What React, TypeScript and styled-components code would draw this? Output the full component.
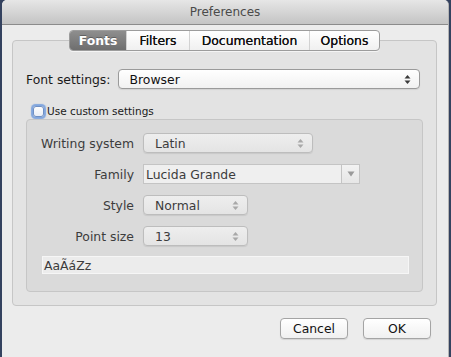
import React from 'react'
import styled, { createGlobalStyle } from 'styled-components'

const GlobalStyle = createGlobalStyle`
  html, body {
    margin: 0;
    padding: 0;
    background: #34425f;
    overflow: hidden;
  }
  * {
    box-sizing: border-box;
  }
`

const Window = styled.div`
  margin-left: 2px;
  width: 447px;
  height: 357px;
  background: #ececec;
  border-radius: 5px 5px 0 0;
  border-right: 1px solid #b4b4b4;
  overflow: hidden;
  display: flex;
  flex-direction: column;
  font-family: "Lucida Grande", "DejaVu Sans", sans-serif;
  font-size: 12.4px;
  color: #1a1a1a;
`

const TitleBar = styled.div`
  height: 25px;
  flex: none;
  display: flex;
  align-items: center;
  justify-content: center;
  background: linear-gradient(#e6e6e6, #c4c4c4);
  border-bottom: 1px solid #8b8b8b;
  color: #4a4a4a;
  font-size: 12px;
`

const Body = styled.div`
  padding: 5px 11px 0 10px;
  display: flex;
  flex-direction: column;
`

const TabBar = styled.div`
  display: flex;
  justify-content: center;
  margin-bottom: -11px;
  position: relative;
  z-index: 1;
`

const TabStrip = styled.div`
  display: flex;
  height: 21px;
  border: 1px solid #9c9c9c;
  border-radius: 4px;
  overflow: hidden;
  background: linear-gradient(#ffffff, #f0f0f0);
  box-shadow: 0 1px 0 rgba(255, 255, 255, 0.6);
`

const Tab = styled.div<{ $active?: boolean; $w: number }>`
  width: ${p => p.$w}px;
  display: flex;
  align-items: center;
  justify-content: center;
  font-size: 12.4px;
  color: ${p => (p.$active ? '#ffffff' : '#111111')};
  font-weight: ${p => (p.$active ? 600 : 500)};
  background: ${p => (p.$active ? 'linear-gradient(#8e8e8e, #6e6e6e)' : 'transparent')};
  text-shadow: ${p => (p.$active ? '0 -1px 0 rgba(0,0,0,0.3)' : '0 0 0.3px #111')};
  & + & {
    border-left: 1px solid ${p => (p.$active ? '#6e6e6e' : '#d2d2d2')};
  }
`

const Pane = styled.div`
  border: 1px solid #c6c6c6;
  border-radius: 4px;
  background: #e3e3e3;
  padding: 28px 13px 13px 13px;
  display: flex;
  flex-direction: column;
`

const Row = styled.div`
  display: flex;
  align-items: center;
  gap: 7px;
  margin-right: 3px;
`

const Label = styled.span<{ $muted?: boolean }>`
  white-space: nowrap;
  color: ${p => (p.$muted ? '#3c3c3c' : '#1a1a1a')};
`

const SelectBox = styled.div<{ $w?: number; $disabled?: boolean }>`
  position: relative;
  height: 20px;
  width: ${p => (p.$w ? `${p.$w}px` : 'auto')};
  flex: ${p => (p.$w ? 'none' : '1')};
  border: 1px solid ${p => (p.$disabled ? '#bdbdbd' : '#9a9a9a')};
  border-radius: 4px;
  background: ${p => (p.$disabled ? 'linear-gradient(#eeeeee, #e4e4e4)' : 'linear-gradient(#ffffff, #f1f1f1)')};
  color: ${p => (p.$disabled ? '#3c3c3c' : '#111111')};
  display: flex;
  align-items: center;
  padding-left: 11px;
  box-shadow: 0 1px 1px rgba(0, 0, 0, 0.08);
`

const Stepper = styled.svg`
  position: absolute;
  right: 8px;
  top: 4px;
`

const ComboBox = styled.div`
  width: 217px;
  height: 20px;
  border: 1px solid #c4c4c4;
  background: #efefef;
  display: flex;
  align-items: center;
  color: #3c3c3c;
`

const ComboText = styled.span`
  flex: 1;
  padding-left: 2px;
`

const ComboButton = styled.div`
  width: 18px;
  height: 100%;
  border-left: 1px solid #c4c4c4;
  display: flex;
  align-items: center;
  justify-content: center;
  background: linear-gradient(#f2f2f2, #e6e6e6);
`

const CheckRow = styled.div`
  display: flex;
  align-items: center;
  height: 14px;
  margin: 15px 0 0 7px;
  font-size: 10.5px;
  gap: 3px;
`

const CheckBox = styled.span`
  width: 11px;
  height: 11px;
  border: 1px solid #6e8fc4;
  border-radius: 3px;
  background: linear-gradient(#fdfdfd, #e9eef6);
  box-shadow: 0 0 1px 1.5px rgba(96, 145, 220, 0.75);
`

const Group = styled.div`
  margin-top: 1px;
  border: 1px solid #c6c6c6;
  border-radius: 4px;
  background: #dadada;
  padding: 13px 14px 17px 14px;
  display: flex;
  flex-direction: column;
  gap: 10px;
`

const FormGrid = styled.div`
  display: grid;
  grid-template-columns: 93px auto;
  column-gap: 9px;
  row-gap: 11px;
  align-items: center;
  justify-items: start;
`

const FormLabel = styled(Label)`
  justify-self: end;
`

const Preview = styled.div`
  margin-left: 1px;
  width: 367px;
  height: 18px;
  background: #ececec;
  border: 1px solid #f6f6f6;
  display: flex;
  align-items: center;
  padding-left: 1px;
  color: #3c3c3c;
`

const Footer = styled.div`
  display: flex;
  justify-content: flex-end;
  gap: 15px;
  padding: 12px 6px 0 0;
`

const Button = styled.div`
  width: 68px;
  height: 21px;
  border: 1px solid #a4a4a4;
  border-radius: 4px;
  background: linear-gradient(#ffffff, #f0f0f0);
  display: flex;
  align-items: center;
  justify-content: center;
  color: #111111;
  box-shadow: 0 1px 1px rgba(0, 0, 0, 0.1);
`

const Arrows: React.FC<{ color: string }> = ({ color }) => (
  <Stepper width="7" height="11" viewBox="0 0 7 11">
    <path d="M3.5 1 L6.5 4.5 L0.5 4.5 Z" fill={color} />
    <path d="M0.5 6.5 L6.5 6.5 L3.5 10 Z" fill={color} />
  </Stepper>
)

const tabs = [
  { name: 'Fonts', w: 56 },
  { name: 'Filters', w: 63 },
  { name: 'Documentation', w: 120 },
  { name: 'Options', w: 70 }
]

export default function App () {
  return (
    <>
      <GlobalStyle />
      <Window>
        <TitleBar>Preferences</TitleBar>
        <Body>
          <TabBar>
            <TabStrip>
              {tabs.map((t, i) => (
                <Tab key={t.name} $active={i === 0} $w={t.w}>{t.name}</Tab>
              ))}
            </TabStrip>
          </TabBar>
          <Pane>
            <Row>
              <Label>Font settings:</Label>
              <SelectBox>
                Browser
                <Arrows color="#3a3a3a" />
              </SelectBox>
            </Row>
            <CheckRow>
              <CheckBox />
              <Label>Use custom settings</Label>
            </CheckRow>
            <Group>
              <FormGrid>
                <FormLabel $muted>Writing system</FormLabel>
                <SelectBox $w={170} $disabled>
                  Latin
                  <Arrows color="#a8a8a8" />
                </SelectBox>
                <FormLabel $muted>Family</FormLabel>
                <ComboBox>
                  <ComboText>Lucida Grande</ComboText>
                  <ComboButton>
                    <svg width="8" height="6" viewBox="0 0 8 6">
                      <path d="M0.5 0.5 L7.5 0.5 L4 5.5 Z" fill="#9a9a9a" />
                    </svg>
                  </ComboButton>
                </ComboBox>
                <FormLabel $muted>Style</FormLabel>
                <SelectBox $w={105} $disabled>
                  Normal
                  <Arrows color="#a8a8a8" />
                </SelectBox>
                <FormLabel $muted>Point size</FormLabel>
                <SelectBox $w={105} $disabled>
                  13
                  <Arrows color="#a8a8a8" />
                </SelectBox>
              </FormGrid>
              <Preview>AaÃáZz</Preview>
            </Group>
          </Pane>
          <Footer>
            <Button>Cancel</Button>
            <Button>OK</Button>
          </Footer>
        </Body>
      </Window>
    </>
  )
}
